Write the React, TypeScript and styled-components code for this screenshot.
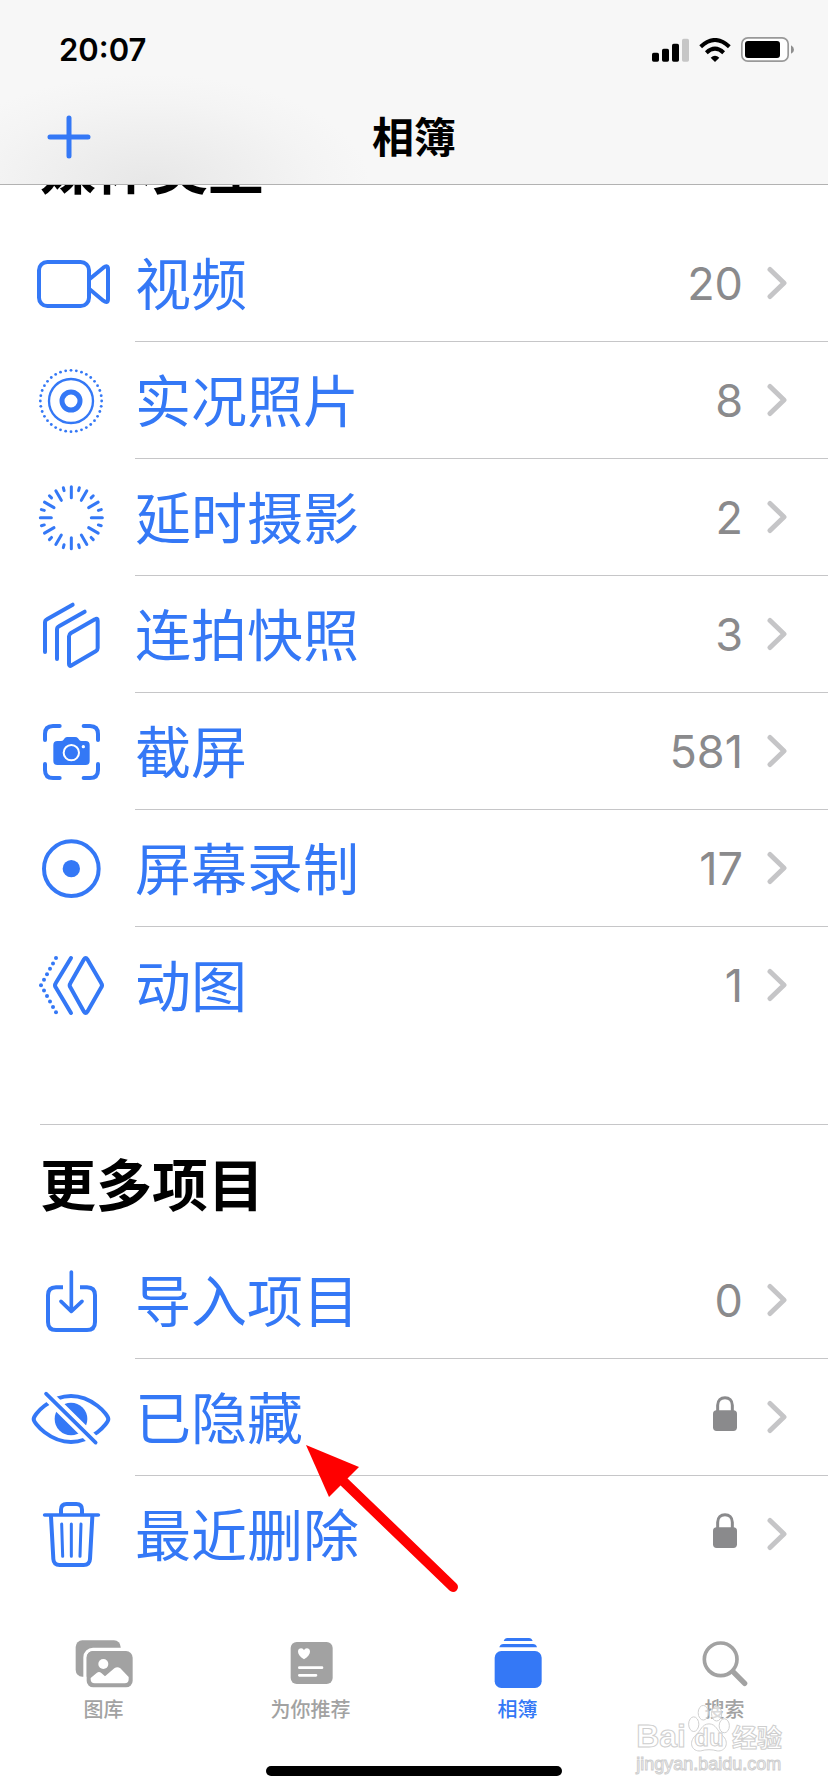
import React from 'react';
import styled, { createGlobalStyle } from 'styled-components';

const BLUE = '#3478f6';
const GRAY = '#a2a2a2';
const CJK = '"Noto Sans CJK SC", sans-serif';

const GlobalStyle = createGlobalStyle`
  *, *::before, *::after { box-sizing: border-box; }
  body { margin: 0; background: #fff; font-family: Inter, ${CJK}; color: #000; }
  svg { display: block; }
`;

const Screen = styled.div`
  display: flex;
  flex-direction: column;
  min-height: 100vh;
  background: #fff;
`;

const Header = styled.header`
  position: sticky;
  top: 0;
  z-index: 2;
  border-bottom: 1px solid #b2b2b2;
  background: radial-gradient(ellipse 220px 110px at 150px 100%, #e7e7e7 0%, #ededed 35%, #f4f4f4 75%, #f7f7f7 100%) #f7f7f7;
`;

const StatusBar = styled.div`
  display: flex;
  align-items: center;
  justify-content: space-between;
  height: 90px;
  padding: 9px 34px 0 59px;
`;

const Clock = styled.time`
  font-size: 31px;
  font-weight: 600;
  line-height: 40px;
`;

const StatusIcons = styled.div`
  display: flex;
  align-items: center;
  gap: 10px;
`;

const NavBar = styled.div`
  display: grid;
  grid-template-columns: 1fr auto 1fr;
  align-items: center;
  height: 94px;
  padding: 0 47px;
`;

const AddButton = styled.button`
  justify-self: start;
  padding: 0;
  border: 0;
  background: none;
  color: ${BLUE};
`;

const Title = styled.h1`
  margin: 0;
  padding-bottom: 4px;
  font: 700 42px/56px ${CJK};
`;

const Main = styled.main`
  flex: 1;
  overflow: hidden;
`;

const Section = styled.section<{ $scrolled?: boolean }>`
  margin-top: ${(p) => (p.$scrolled ? '-77px' : '80px')};
`;

const SectionTitle = styled.h2<{ $ruled?: boolean }>`
  display: flex;
  align-items: center;
  height: ${(p) => (p.$ruled ? 118 : 117)}px;
  margin: 0 0 0 40px;
  padding-bottom: 4px;
  border-top: ${(p) => (p.$ruled ? '1px solid #c6c6c8' : '0')};
  font: 700 56px/80px ${CJK};
`;

const List = styled.ul`
  margin: 0;
  padding: 0;
  list-style: none;
`;

const Item = styled.li`
  position: relative;
`;

const Row = styled.a`
  display: flex;
  align-items: center;
  height: 117px;
  padding-left: 27px;
  gap: 20px;
  color: ${BLUE};
  text-decoration: none;
`;

const IconBox = styled.svg`
  flex: none;
  margin-bottom: 1px;
`;

const RowBody = styled.span<{ $last?: boolean }>`
  display: flex;
  flex: 1;
  align-items: center;
  gap: 24px;
  height: 117px;
  padding-right: 41px;
  border-bottom: 1px solid ${(p) => (p.$last ? 'transparent' : '#c6c6c8')};
`;

const Label = styled.span`
  flex: 1;
  padding-bottom: 4px;
  font: 400 56px/80px ${CJK};
`;

const Count = styled.span`
  padding-top: 2px;
  color: #8a8a8c;
  font-size: 45px;
  line-height: 56px;
`;

const LockIcon = styled.svg`
  margin: 0 6px 8px 0;
`;

const Pointer = styled.svg`
  position: absolute;
  z-index: 1;
  top: 86px;
  left: 306px;
  pointer-events: none;
`;

const Footer = styled.footer`
  position: sticky;
  bottom: 0;
  padding: 8px 0 16px;
  background: #fff;
`;

const TabBar = styled.nav`
  display: flex;
`;

const Tab = styled.a<{ $active?: boolean }>`
  display: flex;
  flex: 1;
  flex-direction: column;
  align-items: center;
  gap: 7px;
  color: ${(p) => (p.$active ? BLUE : GRAY)};
  font: 500 20px/24px ${CJK};
  text-decoration: none;
`;

const HomeIndicator = styled.div`
  width: 296px;
  height: 10px;
  margin: 45px auto 0;
  border-radius: 5px;
  background: #000;
`;

const Watermark = styled.div`
  position: absolute;
  right: 46px;
  bottom: 16px;
  color: #fff;
  -webkit-text-stroke: 1px #cecece;
  pointer-events: none;
`;

const WatermarkBrand = styled.div`
  display: flex;
  align-items: flex-end;
  gap: 2px;
  font: 700 32px/32px "Liberation Sans", sans-serif;
`;

const Paw = styled.span`
  position: relative;
  font-size: 24px;
  line-height: 28px;

  span {
    position: absolute;
    inset: auto 0 0;
    text-align: center;
  }
`;

const WatermarkName = styled.span`
  font: 700 25px/32px ${CJK};
`;

const WatermarkSite = styled.div`
  font: 400 18px/24px "Liberation Sans", sans-serif;
`;

const polar = (cx: number, cy: number, r: number, deg: number) => {
  const a = (deg * Math.PI) / 180;
  return [cx + r * Math.sin(a), cy - r * Math.cos(a)];
};

const RowIcon = ({ children }: { children: React.ReactNode }) => (
  <IconBox
    width="88"
    height="88"
    viewBox="0 0 264 264"
    fill="none"
    stroke="currentColor"
    strokeWidth="12"
    strokeLinecap="round"
    strokeLinejoin="round"
    aria-hidden="true"
  >
    {children}
  </IconBox>
);

const VideoIcon = () => (
  <RowIcon>
    <rect x="36" y="69" width="150" height="132" rx="25" />
    <path d="M188 120 229 86Q243 76 243 90V180Q243 195 229 185L188 151" />
  </RowIcon>
);

const LiveIcon = () => (
  <RowIcon>
    <circle cx="132" cy="135" r="27" strokeWidth="15" />
    <circle cx="132" cy="135" r="66" strokeWidth="7" />
    <g fill="currentColor" stroke="none">
      {Array.from({ length: 36 }, (_, i) => {
        const [x, y] = polar(132, 135, 92, i * 10);
        return <circle key={i} cx={x} cy={y} r="4.2" />;
      })}
    </g>
  </RowIcon>
);

const TimelapseIcon = () => (
  <RowIcon>
    {Array.from({ length: 24 }, (_, i) => {
      const long = i % 2 === 0;
      const [x1, y1] = polar(133, 134, long ? 60 : 84, i * 15);
      const [x2, y2] = polar(133, 134, 93, i * 15);
      return <line key={i} x1={x1} y1={y1} x2={x2} y2={y2} strokeWidth="9" />;
    })}
  </RowIcon>
);

const BurstIcon = () => (
  <RowIcon>
    <path d="M137 44 60 88Q54 91 54 98V186" />
    <path d="M173 65 96 109Q90 112 90 119V207" />
    <path d="M204 88 132 129Q126 133 126 139V222Q126 231 134 226L206 184Q212 180 212 174V92Q212 83 204 88Z" />
  </RowIcon>
);

const ScreenshotIcon = () => (
  <RowIcon>
    <path d="M54 99V81Q54 57 78 57H98M170 57H189Q213 57 213 81V99M213 171V189Q213 213 189 213H170M98 213H78Q54 213 54 189V171" />
    <path
      d="M91 102H102Q107 102 109 99L113 94Q116 90 122 90H144Q150 90 153 94L157 99Q159 102 164 102H176Q188 102 188 114V162Q188 174 176 174H91Q79 174 79 162V114Q79 102 91 102Z"
      fill="currentColor"
      stroke="none"
    />
    <circle cx="133" cy="137" r="23" stroke="#fff" strokeWidth="6" />
    <circle cx="169" cy="119" r="5" fill="#fff" stroke="none" />
  </RowIcon>
);

const RecordIcon = () => (
  <RowIcon>
    <circle cx="133" cy="134" r="82" />
    <circle cx="133" cy="134" r="26" fill="currentColor" stroke="none" />
  </RowIcon>
);

const AnimatedIcon = () => (
  <RowIcon>
    <path d="M171 55Q176 47 181 55L223 127Q227 133 223 139L181 212Q176 220 171 212L130 139Q126 133 130 127Z" />
    <path d="M132 51 86 127Q82 133 86 139L132 216" />
    <g fill="currentColor" stroke="none">
      {[0, 1, 2, 3, 4, 5, 6, 7, 8, 9, 10].map((i) => (
        <circle key={i} cx={42 + Math.abs(i - 5) * 9} cy={51 + i * 16.3} r="6" />
      ))}
    </g>
  </RowIcon>
);

const ImportIcon = () => (
  <RowIcon>
    <path
      d="M108 94H87Q63 94 63 118V198Q63 222 87 222H180Q204 222 204 198V118Q204 94 180 94H159"
      strokeLinecap="butt"
    />
    <path d="M133 48V165M102 136 133 166 165 136" strokeWidth="11" />
  </RowIcon>
);

const HiddenIcon = () => (
  <RowIcon>
    <path d="M20 138C20 124 70 69 132 69S244 124 244 138 194 207 132 207 20 152 20 138Z" />
    <circle cx="132" cy="138" r="49" fill="currentColor" stroke="none" />
    <path d="M57 62 206 209" stroke="#fff" strokeWidth="34" />
    <path d="M57 62 206 209" strokeWidth="11" />
  </RowIcon>
);

const TrashIcon = () => (
  <RowIcon>
    <path d="M53 75H214" strokeWidth="11" />
    <path d="M102 72V59Q102 42 119 42H148Q165 42 165 59V72" />
    <path d="M72 80 79 207Q80 225 98 225H170Q188 225 189 207L196 80" />
    <path d="M104 102 107 199M133 102V199M162 102 159 199" strokeWidth="9" />
  </RowIcon>
);

const Chevron = () => (
  <svg width="20" height="34" viewBox="0 0 20 34" fill="none" stroke="#c5c5c7" strokeWidth="5" strokeLinecap="round" strokeLinejoin="round" aria-hidden="true">
    <path d="M3 3.500 17 17 3 30.500" />
  </svg>
);

const Lock = () => (
  <LockIcon width="24" height="35" viewBox="0 0 72 105" fill="#8a8a8c" role="img" aria-label="已锁定">
    <rect y="43" width="72" height="62" rx="11" />
    <path d="M14 48V28C14 12 24 5 36 5S58 12 58 28V48" fill="none" stroke="#8a8a8c" strokeWidth="9" />
  </LockIcon>
);

type Entry = { icon: React.ReactNode; label: string; count?: number; pointed?: boolean };

const mediaTypes: Entry[] = [
  { icon: <VideoIcon />, label: '视频', count: 20 },
  { icon: <LiveIcon />, label: '实况照片', count: 8 },
  { icon: <TimelapseIcon />, label: '延时摄影', count: 2 },
  { icon: <BurstIcon />, label: '连拍快照', count: 3 },
  { icon: <ScreenshotIcon />, label: '截屏', count: 581 },
  { icon: <RecordIcon />, label: '屏幕录制', count: 17 },
  { icon: <AnimatedIcon />, label: '动图', count: 1 },
];

const moreItems: Entry[] = [
  { icon: <ImportIcon />, label: '导入项目', count: 0 },
  { icon: <HiddenIcon />, label: '已隐藏', pointed: true },
  { icon: <TrashIcon />, label: '最近删除' },
];

const AlbumList = ({ entries }: { entries: Entry[] }) => (
  <List>
    {entries.map((entry, i) => (
      <Item key={entry.label}>
        <Row href="#">
          {entry.icon}
          <RowBody $last={i === entries.length - 1}>
            <Label>{entry.label}</Label>
            {entry.count === undefined ? <Lock /> : <Count>{entry.count}</Count>}
            <Chevron />
          </RowBody>
        </Row>
        {entry.pointed && (
          <Pointer width="156" height="150" viewBox="0 0 156 150" aria-hidden="true">
            <path d="M36 35 147 142" stroke="#f00" strokeWidth="10" strokeLinecap="round" />
            <path d="M0 0 53 22 23 52Z" fill="#f00" />
          </Pointer>
        )}
      </Item>
    ))}
  </List>
);

const TabIcon = ({ children }: { children: React.ReactNode }) => (
  <svg width="60" height="52" viewBox="0 0 180 156" fill="currentColor" aria-hidden="true">
    {children}
  </svg>
);

export default function App() {
  return (
    <Screen>
      <GlobalStyle />
      <Header>
        <StatusBar>
          <Clock>20:07</Clock>
          <StatusIcons>
            <svg width="37" height="24" viewBox="0 0 111 72" aria-hidden="true">
              <rect y="44" width="21" height="27" rx="5" />
              <rect x="30" y="32" width="21" height="39" rx="5" />
              <rect x="60" y="17" width="21" height="54" rx="5" />
              <rect x="90" y="2" width="21" height="69" rx="5" fill="#c6c6c6" />
            </svg>
            <svg width="32" height="24" viewBox="0 0 96 72" fill="none" stroke="#000" strokeWidth="12" aria-hidden="true">
              <path d="M5 26Q48-14 91 26M22 44Q48 20 74 44" />
              <path d="M35 59Q48 48 61 59L48 72Z" fill="#000" stroke="none" />
            </svg>
            <svg width="53" height="25" viewBox="0 0 159 75" aria-hidden="true">
              <rect x="2.500" y="2.500" width="139" height="70" rx="18" fill="#fff" stroke="#999" strokeWidth="5" />
              <rect x="12" y="12" width="105" height="51" rx="9" />
              <path d="M150 25Q159 30 159 38T150 50Z" fill="#8e8e8e" />
            </svg>
          </StatusIcons>
        </StatusBar>
        <NavBar>
          <AddButton type="button" aria-label="添加">
            <svg width="44" height="44" viewBox="0 0 44 44" stroke="currentColor" strokeWidth="5" strokeLinecap="round">
              <path d="M22 3V41M3 22H41" />
            </svg>
          </AddButton>
          <Title>相簿</Title>
        </NavBar>
      </Header>

      <Main>
        <Section $scrolled>
          <SectionTitle>媒体类型</SectionTitle>
          <AlbumList entries={mediaTypes} />
        </Section>
        <Section>
          <SectionTitle $ruled>更多项目</SectionTitle>
          <AlbumList entries={moreItems} />
        </Section>
      </Main>

      <Footer>
        <TabBar>
          <Tab href="#">
            <TabIcon>
              <rect x="5" y="7" width="135" height="109" rx="20" />
              <rect x="33" y="34" width="148" height="119" rx="24" fill="none" stroke="#fff" strokeWidth="10" />
              <rect x="38" y="39" width="138" height="109" rx="20" />
              <circle cx="88" cy="78" r="15" fill="#fff" />
              <path d="M50 120 68 105Q75 99 82 105L93 115 121 91Q130 84 139 91L164 117V124Q164 136 152 136H62Q50 136 50 124Z" fill="#fff" />
            </TabIcon>
            图库
          </Tab>
          <Tab href="#">
            <TabIcon>
              <rect x="29" y="12" width="126" height="126" rx="18" />
              <path d="M69 64Q51 52 51 41C51 29 66 28 69 37 72 28 87 29 87 41Q87 52 69 64Z" fill="#fff" />
              <path d="M55 89H123M55 112H105" stroke="#fff" strokeWidth="8" strokeLinecap="round" />
            </TabIcon>
            为你推荐
          </Tab>
          <Tab href="#" $active aria-current="page">
            <TabIcon>
              <path d="M47 9Q50 0 58 0H123Q131 0 134 9ZM34 28Q37 18 46 18H135Q144 18 147 28Z" />
              <rect x="20" y="39" width="141" height="111" rx="20" />
            </TabIcon>
            相簿
          </Tab>
          <Tab href="#">
            <TabIcon>
              <circle cx="77" cy="64" r="49" fill="none" stroke="currentColor" strokeWidth="11" />
              <path d="M114 101 149 136" stroke="currentColor" strokeWidth="16" strokeLinecap="round" />
            </TabIcon>
            搜索
          </Tab>
        </TabBar>
        <HomeIndicator />
        <Watermark>
          <WatermarkBrand>
            Bai
            <Paw>
              <svg width="42" height="48" viewBox="0 0 132 150" fill="#fff" fillOpacity="0.6" stroke="#cecece" strokeWidth="3" aria-hidden="true">
                <ellipse cx="18" cy="63" rx="16" ry="23" />
                <ellipse cx="48" cy="27" rx="16" ry="23" />
                <ellipse cx="90" cy="30" rx="16" ry="23" />
                <ellipse cx="114" cy="68" rx="16" ry="22" />
                <path d="M66 62C88 62 92 84 108 98 132 120 118 150 92 147 76 142 56 142 40 147 12 150 0 120 24 98 40 84 44 62 66 62Z" />
              </svg>
              <span>du</span>
            </Paw>
            <WatermarkName>经验</WatermarkName>
          </WatermarkBrand>
          <WatermarkSite>jingyan.baidu.com</WatermarkSite>
        </Watermark>
      </Footer>
    </Screen>
  );
}
